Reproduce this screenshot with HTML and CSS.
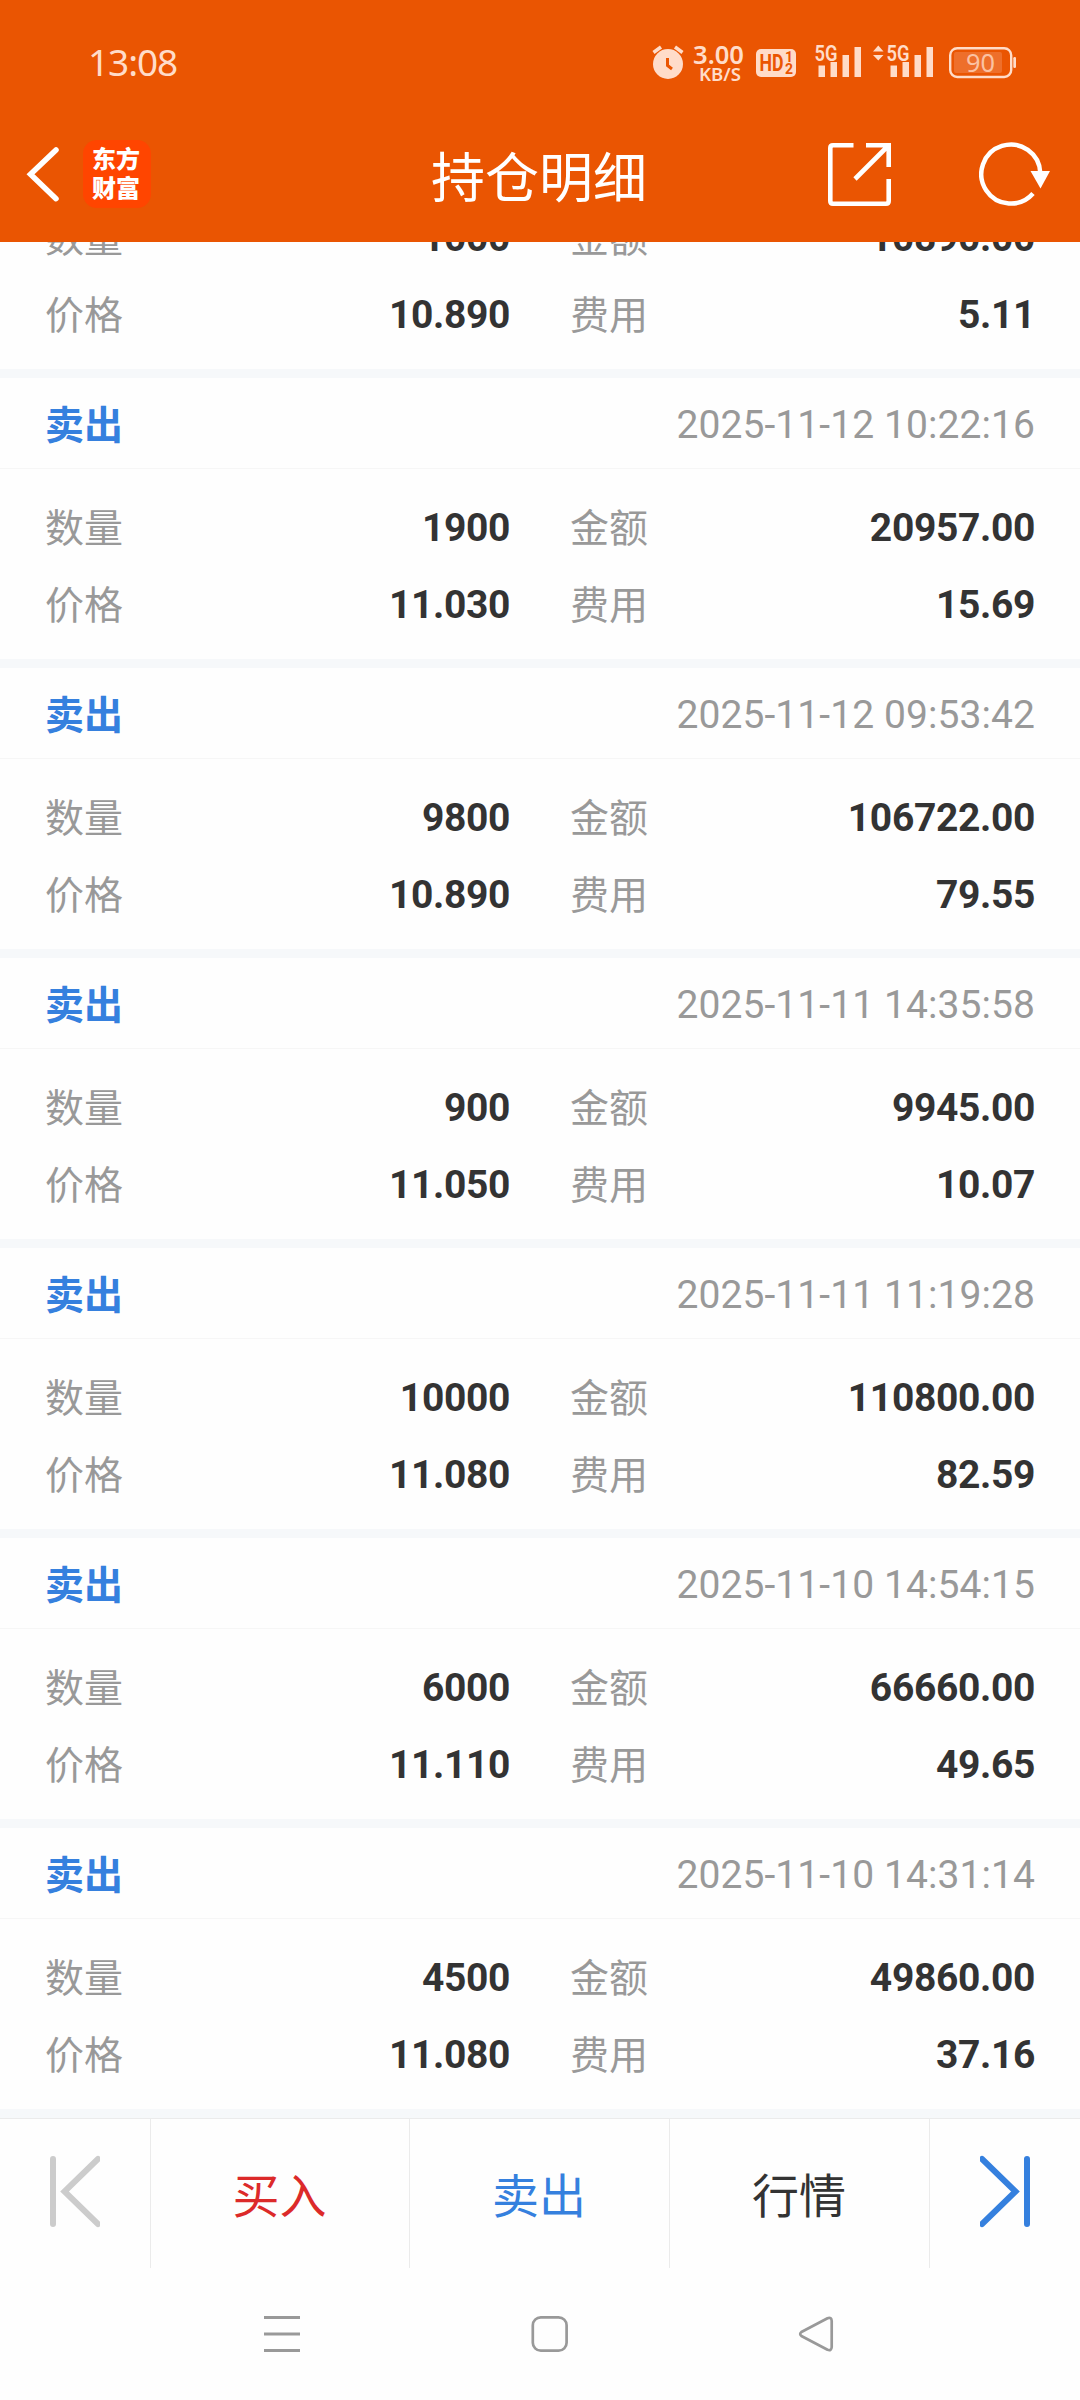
FILE: index.html
```html
<!DOCTYPE html>
<html lang="zh-CN">
<head>
<meta charset="utf-8">
<title>持仓明细</title>
<link rel="stylesheet" href="styles.css">
</head>
<body>
<div class="screen">
  <header class="top">
    <div class="status">
      <span class="clock">13:08</span>
      <svg class="indicators" width="390" height="50" viewBox="635 38 390 50" fill="#ffdcc9">
        <circle cx="668" cy="64" r="15"/>
        <path d="M653.5 52.5L661 47M675 47L682.500 52.500" stroke="#ffdcc9" stroke-width="3.500"/>
        <path d="M667.500 58V65.500L672 69" fill="none" stroke="#ea5502" stroke-width="3"/>
        <text x="693" y="63.500" class="speed" textLength="51" lengthAdjust="spacingAndGlyphs">3.00</text>
        <text x="699" y="80.500" class="unit" textLength="42" lengthAdjust="spacingAndGlyphs">KB/S</text>
        <rect x="756" y="49" width="40" height="28" rx="5"/>
        <text x="759.500" y="71" class="hd" textLength="24" lengthAdjust="spacingAndGlyphs">HD</text>
        <text x="785" y="62" class="sim">1</text>
        <text x="785" y="74" class="sim">2</text>
        <text x="814.500" y="60.500" class="net" textLength="23" lengthAdjust="spacingAndGlyphs">5G</text>
        <path d="M818.500 65.500h6.500V77h-6.500zM830.500 62h6.500v15h-6.500zM842.500 55h6.500v22h-6.500zM854.500 47h6.500v30h-6.500z"/>
        <path d="M873 51.500L878.300 45.500L883.500 51.500zM873 55L878.300 60.500L883.500 55z"/>
        <text x="886.500" y="60.500" class="net" textLength="23" lengthAdjust="spacingAndGlyphs">5G</text>
        <path d="M890.500 65.500h6.500V77h-6.500zM902.500 62h6.500v15h-6.500zM914.500 55h6.500v22h-6.500zM926.500 47h6.500v30h-6.500z"/>
        <rect x="950.200" y="48.200" width="61" height="28.800" rx="7" fill="none" stroke="#ffdcc9" stroke-width="2.400"/>
        <rect x="954" y="52" width="48" height="21" rx="2" fill="#ee6f2b"/>
        <text x="966" y="71.500" class="battery" textLength="29" lengthAdjust="spacingAndGlyphs">90</text>
        <rect x="1013.300" y="57" width="2.700" height="11" rx="1.300"/>
      </svg>
    </div>
    <div class="titlebar">
      <div class="left">
        <svg width="34" height="58" viewBox="26 145 34 58" fill="none" stroke="#fff" stroke-width="5.500" stroke-linecap="round" stroke-linejoin="miter"><path d="M56 150L30.500 174.300L56 198.700"/></svg>
        <div class="logo"><span>东方</span><span>财富</span></div>
      </div>
      <h1>持仓明细</h1>
      <div class="right">
        <svg width="63" height="63" viewBox="828 143 63 63" fill="none" stroke="#fff" stroke-width="4.600">
          <path d="M853.500 145.300H833Q830.300 145.300 830.300 148V201Q830.300 203.700 833 203.700H886Q888.700 203.700 888.700 201V179"/>
          <path d="M866 145.300H888.700V167M888 146L855 179"/>
        </svg>
        <svg width="72" height="66" viewBox="979 141 72 66">
          <path d="M1033 193.500A29.500 29.500 0 1 1 1040.300 173" fill="none" stroke="#fff" stroke-width="4.500"/>
          <path d="M1030.500 171H1050L1040.500 188.500z" fill="#fff"/>
        </svg>
      </div>
    </div>
  </header>

  <main class="list">
    <section class="card"><dl class="body">
      <div><dt>数量</dt><dd>1000</dd></div><div><dt>金额</dt><dd>10890.00</dd></div>
      <div><dt>价格</dt><dd>10.890</dd></div><div><dt>费用</dt><dd>5.11</dd></div>
    </dl></section>
    <section class="card"><div class="head"><b>卖出</b><time>2025-11-12 10:22:16</time></div><dl class="body">
      <div><dt>数量</dt><dd>1900</dd></div><div><dt>金额</dt><dd>20957.00</dd></div>
      <div><dt>价格</dt><dd>11.030</dd></div><div><dt>费用</dt><dd>15.69</dd></div>
    </dl></section>
    <section class="card"><div class="head"><b>卖出</b><time>2025-11-12 09:53:42</time></div><dl class="body">
      <div><dt>数量</dt><dd>9800</dd></div><div><dt>金额</dt><dd>106722.00</dd></div>
      <div><dt>价格</dt><dd>10.890</dd></div><div><dt>费用</dt><dd>79.55</dd></div>
    </dl></section>
    <section class="card"><div class="head"><b>卖出</b><time>2025-11-11 14:35:58</time></div><dl class="body">
      <div><dt>数量</dt><dd>900</dd></div><div><dt>金额</dt><dd>9945.00</dd></div>
      <div><dt>价格</dt><dd>11.050</dd></div><div><dt>费用</dt><dd>10.07</dd></div>
    </dl></section>
    <section class="card"><div class="head"><b>卖出</b><time>2025-11-11 11:19:28</time></div><dl class="body">
      <div><dt>数量</dt><dd>10000</dd></div><div><dt>金额</dt><dd>110800.00</dd></div>
      <div><dt>价格</dt><dd>11.080</dd></div><div><dt>费用</dt><dd>82.59</dd></div>
    </dl></section>
    <section class="card"><div class="head"><b>卖出</b><time>2025-11-10 14:54:15</time></div><dl class="body">
      <div><dt>数量</dt><dd>6000</dd></div><div><dt>金额</dt><dd>66660.00</dd></div>
      <div><dt>价格</dt><dd>11.110</dd></div><div><dt>费用</dt><dd>49.65</dd></div>
    </dl></section>
    <section class="card"><div class="head"><b>卖出</b><time>2025-11-10 14:31:14</time></div><dl class="body">
      <div><dt>数量</dt><dd>4500</dd></div><div><dt>金额</dt><dd>49860.00</dd></div>
      <div><dt>价格</dt><dd>11.080</dd></div><div><dt>费用</dt><dd>37.16</dd></div>
    </dl></section>
  </main>

  <nav class="actions">
    <span class="step"><svg width="50" height="73" viewBox="50 2155 50 73" fill="none" stroke="#ccc" stroke-width="6" stroke-linecap="round"><path d="M53 2159V2224M98 2159L64.500 2191.500L98 2224"/></svg></span>
    <span class="buy">买入</span>
    <span class="sell">卖出</span>
    <span class="quote">行情</span>
    <span class="step"><svg width="50" height="73" viewBox="980 2155 50 73" fill="none" stroke="#3580de" stroke-width="6" stroke-linecap="round"><path d="M1027 2159V2224M982 2159L1015.500 2191.500L982 2224"/></svg></span>
  </nav>

  <div class="system">
    <svg width="36" height="38" viewBox="0 0 36 38" stroke="#999" stroke-width="3"><path d="M0 2.500H36M0 19H36M0 35.500H36"/></svg>
    <svg width="38" height="38" viewBox="0 0 38 38" fill="none" stroke="#999" stroke-width="2.700"><rect x="2.800" y="2.300" width="33.800" height="33.400" rx="8"/></svg>
    <svg width="36" height="38" viewBox="0 0 36 38" fill="none" stroke="#999" stroke-width="2.700" stroke-linejoin="round"><path d="M3.400 17L29.500 3.200Q33.500 1.800 33.700 6V32Q33.500 36.200 29.500 34.800L3.400 21Q1 19 3.400 17z"/></svg>
  </div>
</div>
</body>
</html>
```
FILE: styles.css
```css
* { box-sizing: border-box; margin: 0; padding: 0; }
body { font-family: Roboto, "Noto Sans CJK SC", sans-serif; background: #fff; color: #333; }
svg { display: block; flex: none; }
.screen { width: 1080px; height: 2400px; display: flex; flex-direction: column; overflow: hidden; background: #fefefe; }

.top { height: 242px; flex: none; background: #ea5502; color: #fff; }
.status { height: 108px; padding: 38px 55px 0 88px; display: flex; justify-content: space-between; }
.clock { font: 37px/48px "Noto Sans", sans-serif; letter-spacing: -1.1px; color: #ffdcc9; }
.indicators text { font-family: "Noto Sans", sans-serif; }
.indicators .speed { font-size: 25px; font-weight: 600; }
.indicators .unit { font-size: 18px; font-weight: 600; }
.indicators .hd { font-family: Roboto, sans-serif; font-size: 23px; font-weight: 700; fill: #ea5502; }
.indicators .sim { font-family: Roboto, sans-serif; font-size: 14px; font-weight: 700; fill: #ea5502; }
.indicators .net { font-family: Roboto, sans-serif; font-size: 22px; font-weight: 600; }
.indicators .battery { font-size: 25px; fill: #fbc2a3; }

.titlebar { height: 132px; padding: 0 29px 0 26px; display: grid; grid-template-columns: 1fr auto 1fr; align-items: center; }
.left { display: flex; align-items: center; gap: 23px; }
.logo { width: 68px; height: 68px; padding: 0 2px 4px 0; border-radius: 14px; background: #ff4500; display: flex; flex-direction: column; align-items: center; justify-content: center; font: 900 24px/29px "Noto Sans CJK SC", sans-serif; }
h1 { font-size: 54px; line-height: 80px; font-weight: 400; padding: 11px 0 0 1px; }
.right { display: flex; justify-content: flex-end; align-items: center; gap: 88px; }

.list { height: 1876px; flex: none; overflow: hidden; display: flex; flex-direction: column; justify-content: flex-end; }
.card { flex: none; border-bottom: 9px solid #f6f8fa; font-size: 39px; }
.head { height: 91px; padding: 0 45px; border-bottom: 1px solid #f6f6f6; display: flex; align-items: center; justify-content: space-between; }
.head b { color: #3580de; font-weight: 700; padding-bottom: 2px; }
.head time { color: #999; padding-top: 3px; letter-spacing: 0.08px; }
.body { height: 190px; padding: 20px 45px 16px; display: grid; grid-template-columns: 1fr 1fr; grid-auto-rows: 77px; column-gap: 60px; }
.body div { display: flex; align-items: center; justify-content: space-between; }
.body dt { color: #999; padding-bottom: 6px; }
.body dd { font-weight: 700; letter-spacing: -0.35px; }

.actions { height: 150px; flex: none; border-top: 1px solid #ebebeb; display: grid; grid-template-columns: 151px 259px 260px 260px 150px; font-size: 47px; }
.actions span { display: flex; align-items: center; justify-content: center; border-right: 1px solid #ebebeb; padding: 0 1px 3px 0; }
.actions span:last-child { border-right: 0; }
.actions .step { padding: 0 0 4px; }
.buy { color: #dc2a2a; }
.sell { color: #3580de; }
.system { height: 132px; flex: none; padding: 0 246px 0 264px; display: flex; align-items: center; justify-content: space-between; }
```
